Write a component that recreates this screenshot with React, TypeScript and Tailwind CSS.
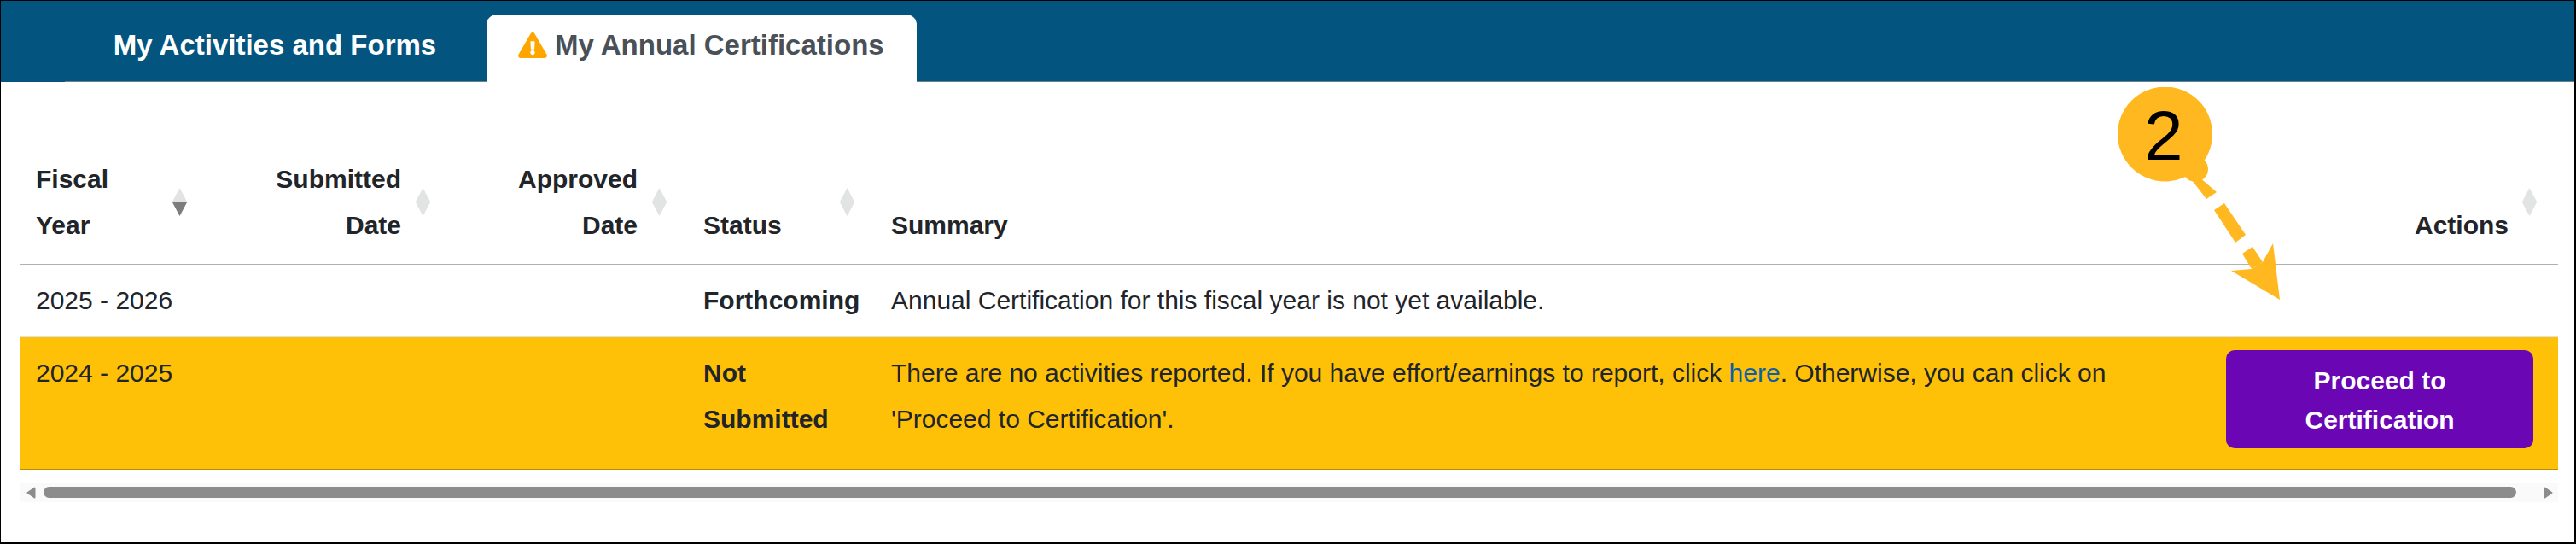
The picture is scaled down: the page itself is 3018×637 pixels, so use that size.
import { FaExclamationTriangle } from "react-icons/fa";

type SortIconProps = { active?: boolean };

function SortIcon({ active }: SortIconProps) {
  return (
    <svg
      viewBox="0 0 17 33"
      className="absolute right-[25px] top-[55px] h-[33px] w-[17px]"
    >
      <polygon points="8.5,0 17,16 0,16" fill="#e2e3e3" />
      <polygon
        points="0,17 17,17 8.5,33"
        fill={active ? "#7d7d80" : "#e2e3e3"}
      />
    </svg>
  );
}

function Callout() {
  return (
    <div className="absolute left-[2480px] top-[101px] h-[250px] w-[195px]">
      <svg viewBox="0 0 195 250" className="absolute inset-0 h-full w-full">
        <circle cx="55.5" cy="55" r="55.5" fill="#ffb81f" />
        <circle cx="91" cy="96" r="15" fill="#ffb81f" />
        <g fill="#ffb81f">
          <polygon points="95,105 116,123 104,131 80,100" />
          <polygon points="125,136 150,173 138,182 113,144" />
          <polygon points="158,187 170,205 157,213 146,195" />
          <polygon points="182,183 190,249 133,215 157,213 170,205" />
        </g>
      </svg>
      <span className="absolute left-[31px] top-[10px] text-[82px] leading-[94px] text-black">
        2
      </span>
    </div>
  );
}

function ScrollBar() {
  return (
    <div className="ml-[23px] mt-[15px] flex h-[23px] w-[2973px] items-center bg-[#fafafa] pl-[7px] pr-[6px]">
      <svg viewBox="0 0 11 14" className="h-[14px] w-[11px]">
        <polygon
          points="9.5,1.5 9.5,12.5 1.5,7"
          fill="#8c8c8c"
          stroke="#8c8c8c"
          strokeWidth="2"
          strokeLinejoin="round"
        />
      </svg>
      <div className="ml-[9px] h-[13px] w-[2897px] rounded-[7px] bg-[#8c8c8c]" />
      <svg viewBox="0 0 11 14" className="ml-[32px] h-[14px] w-[11px]">
        <polygon
          points="1.5,1.5 1.5,12.5 9.5,7"
          fill="#8c8c8c"
          stroke="#8c8c8c"
          strokeWidth="2"
          strokeLinejoin="round"
        />
      </svg>
    </div>
  );
}

export default function App() {
  const thClass =
    "relative px-[18px] pb-[18px] pt-[18px] align-bottom font-bold";

  return (
    <div className="relative h-[637px] w-[3018px] overflow-hidden border-b-2 border-l border-r-2 border-t border-black bg-white font-['Liberation_Sans',Arial,sans-serif] text-[30px] leading-[54px] text-[#212529]">
      <nav className="h-[95px] bg-[#03557f] pl-[75px] pt-[16px]">
        <div className="flex h-[79px] border-b border-[#6b7f8c] pl-[17px]">
          <div className="flex h-[79px] w-[458px] items-start justify-center pt-[13px] text-[33px] font-bold leading-[46px] text-white">
            My Activities and Forms
          </div>
          <div className="ml-[19px] flex h-[79px] w-[504px] items-start gap-[9px] rounded-t-[12px] bg-white pl-[37px] pt-[13px] text-[33px] font-bold leading-[46px] text-[#495057]">
            <FaExclamationTriangle className="mt-[8px] h-[30px] w-[34px] text-[#ffa500]" />
            My Annual Certifications
          </div>
        </div>
      </nav>

      <div className="ml-[23px] mt-[69px] w-[2973px]">
        <table className="w-full table-fixed border-collapse">
          <colgroup>
            <col className="w-[220px]" />
            <col className="w-[285px]" />
            <col className="w-[277px]" />
            <col className="w-[220px]" />
            <col className="w-[1564px]" />
            <col className="w-[407px]" />
          </colgroup>
          <thead>
            <tr className="border-b border-[#b0b0b0]">
              <th className={`${thClass} text-left`}>
                Fiscal
                <br />
                Year
                <SortIcon active />
              </th>
              <th className={`${thClass} pr-[59px] text-right`}>
                Submitted
                <br />
                Date
                <SortIcon />
              </th>
              <th className={`${thClass} pr-[59px] text-right`}>
                Approved
                <br />
                Date
                <SortIcon />
              </th>
              <th className={`${thClass} text-left`}>
                Status
                <SortIcon />
              </th>
              <th className={`${thClass} text-left`}>Summary</th>
              <th className={`${thClass} pr-[58px] text-right`}>
                Actions
                <SortIcon />
              </th>
            </tr>
          </thead>
          <tbody>
            <tr className="border-b border-[#dee2e6]">
              <td className="px-[18px] py-[15px] align-top">2025 - 2026</td>
              <td className="px-[18px] py-[15px]" />
              <td className="px-[18px] py-[15px]" />
              <td className="px-[18px] py-[15px] align-top font-bold">
                Forthcoming
              </td>
              <td className="px-[18px] py-[15px] align-top">
                Annual Certification for this fiscal year is not yet available.
              </td>
              <td className="px-[18px] py-[15px]" />
            </tr>
            <tr className="border-b border-[#b98d08] bg-[#ffc107]">
              <td className="px-[18px] pb-[24px] pt-[15px] align-top">
                2024 - 2025
              </td>
              <td />
              <td />
              <td className="px-[18px] pb-[24px] pt-[15px] align-top font-bold">
                Not Submitted
              </td>
              <td className="px-[18px] pb-[24px] pt-[15px] align-top">
                There are no activities reported. If you have effort/earnings to
                report, click <a className="text-[#0e5ea8]">here</a>. Otherwise,
                you can click on 'Proceed to Certification'.
              </td>
              <td className="pb-[24px] pl-[18px] pr-[29px] pt-[15px] align-top">
                <button className="block h-[115px] w-[360px] rounded-[10px] bg-[#6a06b3] px-[40px] pt-[2px] text-center text-[30px] font-bold leading-[46px] text-white">
                  Proceed to Certification
                </button>
              </td>
            </tr>
          </tbody>
        </table>
      </div>
      <ScrollBar />

      <Callout />
    </div>
  );
}
